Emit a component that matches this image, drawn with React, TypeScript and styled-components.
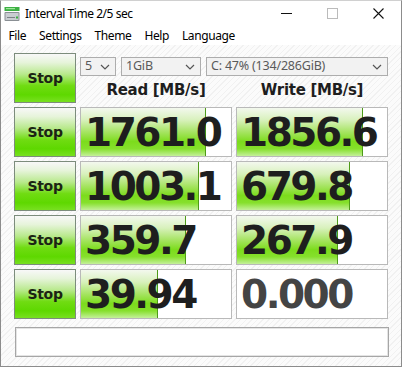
import styled, { createGlobalStyle } from "styled-components";

const GlobalStyle = createGlobalStyle`
    html, body { margin: 0; padding: 0; background: #ffffff; }
    * { box-sizing: border-box; }
`

const UIFont = `"Noto Sans", "Open Sans", "Liberation Sans", sans-serif`;
const BoldFont = `"DejaVu Sans", "Verdana", sans-serif`;

const rows = [
    { read: "1761.0", write: "1856.6" },
    { read: "1003.1", write: "679.8" },
    { read: "359.7", write: "267.9" },
    { read: "39.94", write: "0.000" },
];

const menus = ["File", "Settings", "Theme", "Help", "Language"];

// log scale meter like the original app
const meterWidth = (v: string) => {
    const n = parseFloat(v);
    if (!n || n <= 0) return 0;
    return Math.round(150 * (0.193 + 0.198 * Math.log10(n)));
};

const AppIcon = () => (
    <svg width="16" height="16" viewBox="0 0 16 16">
        <rect x="0.5" y="1" width="15" height="4" fill="#3cb043" />
        <rect x="2" y="2" width="9" height="1.2" fill="#9ee89a" />
        <rect x="0.5" y="6" width="15" height="9" rx="1" fill="#8a8f94" />
        <rect x="1.5" y="7" width="13" height="7" fill="#c9cdd1" />
        <rect x="3" y="11" width="8" height="1" fill="#7c8186" />
        <rect x="12" y="10.5" width="2" height="2" fill="#3cb043" />
    </svg>
);

const Chevron = () => (
    <svg width="10" height="6" viewBox="0 0 10 6">
        <polyline points="1,1 5,5 9,1" fill="none" stroke="#555" strokeWidth="1.2" />
    </svg>
);

const App = () => {
    return (
        <>
            <GlobalStyle />
            <Window>
                <TitleBar>
                    <TitleLeft>
                        <AppIcon />
                        <TitleText>Interval Time 2/5 sec</TitleText>
                    </TitleLeft>
                    <Controls>
                        <CtrlBtn>
                            <svg width="11" height="11" viewBox="0 0 11 11"><line x1="0" y1="5.5" x2="11" y2="5.5" stroke="#111" strokeWidth="1" /></svg>
                        </CtrlBtn>
                        <CtrlBtn>
                            <svg width="11" height="11" viewBox="0 0 11 11"><rect x="0.5" y="0.5" width="10" height="10" fill="none" stroke="#bbb" strokeWidth="1" /></svg>
                        </CtrlBtn>
                        <CtrlBtn>
                            <svg width="11" height="11" viewBox="0 0 11 11"><path d="M0.5 0.5 L10.5 10.5 M10.5 0.5 L0.5 10.5" stroke="#111" strokeWidth="1.1" /></svg>
                        </CtrlBtn>
                    </Controls>
                </TitleBar>
                <MenuBar>
                    {menus.map(m => <MenuItem key={m}>{m}</MenuItem>)}
                </MenuBar>
                <Client>
                    <Grid>
                        <StopButton>Stop</StopButton>
                        <TopCell>
                            <Selects>
                                <Select $w={36}><span>5</span><Chevron /></Select>
                                <Select $w={80}><span>1GiB</span><Chevron /></Select>
                                <Select $w={182}><span>C: 47% (134/286GiB)</span><Chevron /></Select>
                            </Selects>
                            <Headers>
                                <Header>Read [MB/s]</Header>
                                <Header>Write [MB/s]</Header>
                            </Headers>
                        </TopCell>
                        {rows.map((r, i) => (
                            <Row key={i}>
                                <StopButton>Stop</StopButton>
                                <ValueBox $fill={meterWidth(r.read)} $zero={parseFloat(r.read) === 0}>{r.read}</ValueBox>
                                <ValueBox $fill={meterWidth(r.write)} $zero={parseFloat(r.write) === 0}>{r.write}</ValueBox>
                            </Row>
                        ))}
                    </Grid>
                    <Comment />
                </Client>
            </Window>
        </>
    )
}

const Window = styled.div`
    width: 402px;height: 367px;
    border: 1px solid #8c8c8c;border-top-color: #d0d0d0;
    background: #ffffff;
    display: flex;flex-direction: column;
    font-family: ${UIFont};
`
const TitleBar = styled.div`
    height: 25px;display: flex;align-items: center;justify-content: space-between;
    padding-left: 3px;
`
const TitleLeft = styled.div`
    display: flex;align-items: center;gap: 5px;
`
const TitleText = styled.span`
    font-size: 12px;color: #000;letter-spacing: -0.45px;
`
const Controls = styled.div`
    display: flex;height: 100%;
`
const CtrlBtn = styled.div`
    width: 46px;height: 100%;display: flex;align-items: center;justify-content: center;
`
const MenuBar = styled.div`
    height: 19px;display: flex;align-items: center;padding-left: 1px;
`
const MenuItem = styled.span`
    font-size: 12px;color: #000;padding: 0 6.5px;letter-spacing: -0.4px;
`
const Client = styled.div`
    flex: 1;padding: 8px 13px 0 13px;
    background: repeating-linear-gradient(135deg, #fbfbfb 0px, #fbfbfb 3px, #f1f1f1 3px, #f1f1f1 4px);
    display: flex;flex-direction: column;gap: 8px;
`
const Grid = styled.div`
    display: grid;grid-template-columns: 62px 152px 152px;
    grid-auto-rows: 50px;column-gap: 4px;row-gap: 4px;
`
const Row = styled.div`
    display: contents;
`
const StopButton = styled.div`
    border: 1px solid #7c8c7c;
    background: linear-gradient(to bottom, #f8f8f8 0%, #e6f4da 18%, #b8e98c 42%, #70dc12 66%, #5ed800 85%, #78e020 100%);
    display: flex;align-items: center;justify-content: center;
    font-family: ${BoldFont};font-weight: bold;font-size: 14px;color: #1c2414;
    letter-spacing: -0.3px;
`
const TopCell = styled.div`
    grid-column: span 2;display: flex;flex-direction: column;padding-top: 4px;
`
const Selects = styled.div`
    display: flex;gap: 5px;
`
const Select = styled.div<{ $w: number }>`
    width: ${({ $w }) => $w}px;height: 19px;
    border: 1px solid #adadad;background: #f2f2f2;
    display: flex;align-items: center;justify-content: space-between;
    padding: 0 5px 0 4px;
    font-size: 12.5px;color: #5a5a5a;letter-spacing: -0.2px;
    span { line-height: 1; }
`
const Headers = styled.div`
    display: grid;grid-template-columns: 152px 152px;column-gap: 4px;margin-top: 5px;
`
const Header = styled.div`
    text-align: center;font-family: ${BoldFont};font-weight: bold;font-size: 15px;color: #1e1e1e;
    letter-spacing: -0.3px;
`
const ValueBox = styled.div<{ $fill: number; $zero: boolean }>`
    border: 1px solid #b9b9b9;
    background-color: #ffffff;
    background-image:
        linear-gradient(#4e9a18, #4e9a18),
        linear-gradient(to bottom, #f3f8ee 0%, #d8f1bc 25%, #a6e462 50%, #7cdc1c 70%, #86e02c 85%, #c4f09a 100%);
    background-repeat: no-repeat;
    background-size: ${({ $fill }) => ($fill ? "1px 100%" : "0 0")}, ${({ $fill }) => $fill}px 100%;
    background-position: ${({ $fill }) => $fill - 1}px 0, 0 0;
    display: flex;align-items: center;padding-left: 4px;
    font-family: ${BoldFont};font-weight: bold;font-size: 39px;letter-spacing: -2.5px;
    color: ${({ $zero }) => ($zero ? "#444444" : "#1e1e1e")};
    overflow: hidden;white-space: nowrap;
`
const Comment = styled.div`
    width: 374px;height: 30px;margin-left: 1px;
    border: 1px solid #a6a6a6;background: #ffffff;
    box-shadow: inset 0 0 0 1px #e4e4e4;
`

export default App;
